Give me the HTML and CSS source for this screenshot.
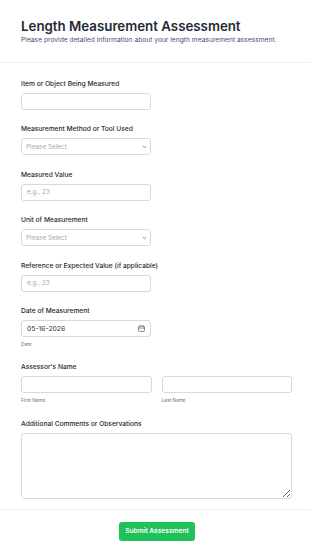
FILE: index.html
```html
<!DOCTYPE html>
<html lang="en">
<head>
  <meta charset="UTF-8">
  <meta name="viewport" content="width=device-width, initial-scale=1.0">
  <title>Length Measurement Assessment</title>
  <link rel="stylesheet" href="styles.css">
</head>
<body>
  <!-- Header -->
  <header class="form-header">
    <h1>Length Measurement Assessment</h1>
    <p class="form-desc">Please provide detailed information about your length measurement assessment.</p>
  </header>

  <!-- Fields -->
  <form class="form-body">
    <div class="field">
      <label>Item or Object Being Measured</label>
      <input class="input half" type="text">
    </div>

    <div class="field">
      <label>Measurement Method or Tool Used</label>
      <div class="select-wrap half">
        <select class="input">
          <option>Please Select</option>
        </select>
        <svg class="chevron" width="5" height="4" viewBox="0 0 5 4"><path d="M1 1.2l1.5 1.5 1.5-1.5" fill="none" stroke="#6b7280" stroke-width="0.8" stroke-linecap="round" stroke-linejoin="round"/></svg>
      </div>
    </div>

    <div class="field">
      <label>Measured Value</label>
      <input class="input half" type="text" placeholder="e.g., 23">
    </div>

    <div class="field">
      <label>Unit of Measurement</label>
      <div class="select-wrap half">
        <select class="input">
          <option>Please Select</option>
        </select>
        <svg class="chevron" width="5" height="4" viewBox="0 0 5 4"><path d="M1 1.2l1.5 1.5 1.5-1.5" fill="none" stroke="#6b7280" stroke-width="0.8" stroke-linecap="round" stroke-linejoin="round"/></svg>
      </div>
    </div>

    <div class="field">
      <label>Reference or Expected Value (if applicable)</label>
      <input class="input half" type="text" placeholder="e.g., 23">
    </div>

    <div class="field">
      <label>Date of Measurement</label>
      <div class="date-wrap half">
        <input class="input date" type="text" value="05-16-2026">
        <svg class="cal" width="7" height="7" viewBox="0 0 7 7"><rect x="0.6" y="1.1" width="5.8" height="5.3" rx="0.8" fill="none" stroke="#4b5563" stroke-width="0.7"/><path d="M0.6 3h5.8M2 0.3v1.4M5 0.3v1.4" stroke="#4b5563" stroke-width="0.7"/></svg>
      </div>
      <span class="sub">Date</span>
    </div>

    <div class="field">
      <label>Assessor's Name</label>
      <div class="name-grid">
        <div>
          <input class="input" type="text">
          <span class="sub">First Name</span>
        </div>
        <div>
          <input class="input" type="text">
          <span class="sub">Last Name</span>
        </div>
      </div>
    </div>

    <div class="field">
      <label>Additional Comments or Observations</label>
      <textarea class="input area"></textarea>
    </div>
  </form>

  <!-- Footer -->
  <footer class="form-footer">
    <button class="submit-btn" type="button">Submit Assessment</button>
  </footer>
</body>
</html>
```

FILE: styles.css
```css
:root {
  --text-dark: #1f2937;
  --text-muted: #6b7280;
  --border: #d6d9de;
  --line: #eceef1;
  --green: #1fc15a;
}
body {
  margin: 0;
  font-family: Inter, 'Noto Sans', Arial, sans-serif;
  color: var(--text-dark);
  background: #fff;
}
/* Header */
.form-header {
  padding: 18px 18px 17px 21px;
  border-bottom: 1px solid var(--line);
}
.form-header h1 {
  margin: 0;
  font-size: 13.3px;
  line-height: 16px;
  font-weight: 600;
  color: #242a35;
}
.form-desc {
  margin: 2px 0 0 0;
  font-size: 6.7px;
  line-height: 9px;
  color: #3f4f6e;
}
/* Form body */
.form-body {
  padding: 16px 18px 10px 21px;
  display: flex;
  flex-direction: column;
  gap: 14.4px;
  border-bottom: 1px solid var(--line);
}
.field {
  display: flex;
  flex-direction: column;
}
.field label {
  font-size: 6.65px;
  line-height: 10px;
  font-weight: 500;
  color: var(--text-dark);
  margin-bottom: 4px;
}
.input {
  display: block;
  box-sizing: border-box;
  width: 100%;
  height: 17px;
  margin: 0;
  padding: 0 5px;
  border: 1px solid var(--border);
  border-radius: 3px;
  background: #fff;
  font-family: inherit;
  font-size: 6.4px;
  color: #374151;
  outline: none;
}
.input::placeholder {
  color: #a3aab5;
}
.half {
  width: 130px;
}
.select-wrap, .date-wrap {
  position: relative;
}
select.input {
  appearance: none;
  -webkit-appearance: none;
  color: #a3aab5;
  padding-left: 4px;
}
.chevron {
  position: absolute;
  right: 4px;
  top: 7px;
}
.date {
  font-size: 6.8px;
  color: #2a313c;
}
.cal {
  position: absolute;
  right: 6px;
  top: 5px;
}
.sub {
  display: block;
  margin-top: 4px;
  font-size: 4.8px;
  line-height: 7px;
  color: var(--text-muted);
}
.name-grid {
  display: grid;
  grid-template-columns: 1fr 1fr;
  gap: 10px;
}
.area {
  height: 66px;
  padding: 4px 5px;
  resize: vertical;
}
/* Footer */
.form-footer {
  display: flex;
  justify-content: center;
  padding: 12px 0 17px 4px;
}
.submit-btn {
  height: 19px;
  padding: 0 6px;
  border: none;
  border-radius: 3px;
  background: var(--green);
  color: #fff;
  font-family: inherit;
  font-size: 6.6px;
  font-weight: 600;
}
```
